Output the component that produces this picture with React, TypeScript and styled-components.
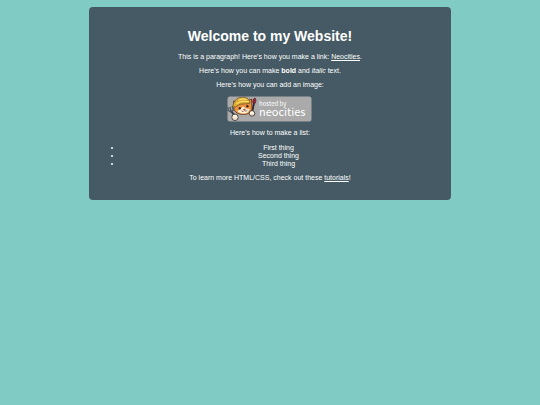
import React from 'react';
import styled, { createGlobalStyle } from 'styled-components';

const GlobalStyle = createGlobalStyle`
  body {
    margin: 0;
    background: #80cbc4;
    color: #fff;
    font-family: "Liberation Sans", Arial, sans-serif;
    font-size: 7px;
    line-height: 8px;
  }
`;

const Container = styled.main`
  box-sizing: border-box;
  width: 67%;
  margin: 7px auto;
  padding: 21px 16px 12px;
  border-radius: 4px;
  background: #455a64;
  text-align: center;
`;

const Title = styled.h1`
  margin: 0 0 9px;
  font-size: 14px;
  line-height: 16px;
`;

const Paragraph = styled.p`
  margin: 0 0 6px;
`;

const Link = styled.a`
  color: inherit;
  text-decoration: underline;
`;

const BadgeLink = styled.a`
  display: block;
  width: 85px;
  margin: 7px auto;
`;

const BadgeArt = styled.svg`
  display: block;
  width: 100%;
  height: auto;
`;

const BadgeText = styled.text`
  fill: #fff;
  font-family: "Noto Sans CJK SC", "Open Sans", sans-serif;
`;

const List = styled.ul`
  margin: 7px 0 6px;
  padding: 0 0 0 17px;
`;

const NeocitiesBadge = () => (
  <BadgeLink href="https://neocities.org/" aria-label="Hosted by Neocities">
    <BadgeArt viewBox="0 0 85 26" aria-hidden="true">
      <rect x="0.5" y="0.5" width="84" height="25" rx="2.5" fill="#aaa" />
      {/* fork */}
      <path d="M8 20 4 15" stroke="#303941" strokeWidth="2" />
      <path d="M0.8 11 1.5 14.5 4 16 6.5 14 5 10.5M2.8 11 4 15" fill="none" stroke="#46535c" strokeWidth="1.2" />
      {/* brush */}
      <path d="M25 17 27 7" stroke="#30262a" strokeWidth="1.8" />
      <path d="M26 7C25.3 4.5 26.3 2.6 28 2 29.2 3.6 29 5.8 28 7.5Z" fill="#a82434" stroke="#562228" strokeWidth="0.8" />
      {/* cat head */}
      <path d="M7 10 6.5 5 11 6 20 5 24.5 3 24.8 10C26 15 22 18.5 16.5 18.5 10 18.5 6 15 7 10Z" fill="#ee9440" stroke="#5a3520" strokeWidth="0.8" />
      <path d="M10.5 15 13 13.5 16 10.5 19 12.5 22.5 13C22 16 20 17.5 16.5 17.5 13 17.5 11 16.5 10.5 15Z" fill="#fff0d8" />
      <path d="M5.5 10.8C7 4 11 1.2 15.5 1.2 20 1.2 22.6 3.5 23 7L20 7.8 13 8.2 8.5 11Z" fill="#dcaa32" stroke="#75562a" strokeWidth="0.8" />
      <path d="M9 8.2C12 5.5 17 4.7 22 5.7M11.5 4 16 2.7 19.5 3.5" fill="none" stroke="#ffe574" strokeWidth="1.1" />
      <ellipse cx="12.8" cy="12.2" rx="1.2" ry="1.3" fill="#34272a" />
      <ellipse cx="20.4" cy="10.3" rx="1.2" ry="1.3" fill="#34272a" />
      <path d="M16.4 13.2H18.4L17.4 14.2ZM14.5 14.7 16 15.7 17.4 14.3 19 15.4 20.5 14" fill="none" stroke="#74372b" strokeWidth="0.7" />
      {/* paws */}
      <circle cx="8" cy="21.3" r="3.2" fill="#fff5e5" stroke="#3a302b" strokeWidth="0.9" />
      <circle cx="25" cy="17.4" r="2.8" fill="#fff5e5" stroke="#3a302b" strokeWidth="0.9" />
      <path d="M7.2 21.5V23M9 21.5V22.8M24.3 18V19.5M26 17.8V19.2" stroke="#b7835b" strokeWidth="0.5" />
      <BadgeText x="32" y="10" fontSize="6">hosted by</BadgeText>
      <BadgeText x="32" y="20" fontSize="11">neocities</BadgeText>
    </BadgeArt>
  </BadgeLink>
);

export default function App() {
  return (
    <>
      <GlobalStyle />
      <Container>
        <Title>Welcome to my Website!</Title>
        <Paragraph>
          This is a paragraph! Here's how you make a link: <Link href="https://neocities.org">Neocities</Link>.
        </Paragraph>
        <Paragraph>
          Here's how you can make <strong>bold</strong> and <em>italic</em> text.
        </Paragraph>
        <Paragraph>Here's how you can add an image:</Paragraph>
        <NeocitiesBadge />
        <Paragraph>Here's how to make a list:</Paragraph>
        <List>
          <li>First thing</li>
          <li>Second thing</li>
          <li>Third thing</li>
        </List>
        <Paragraph>
          To learn more HTML/CSS, check out these <Link href="https://neocities.org/tutorials">tutorials</Link>!
        </Paragraph>
      </Container>
    </>
  );
}
